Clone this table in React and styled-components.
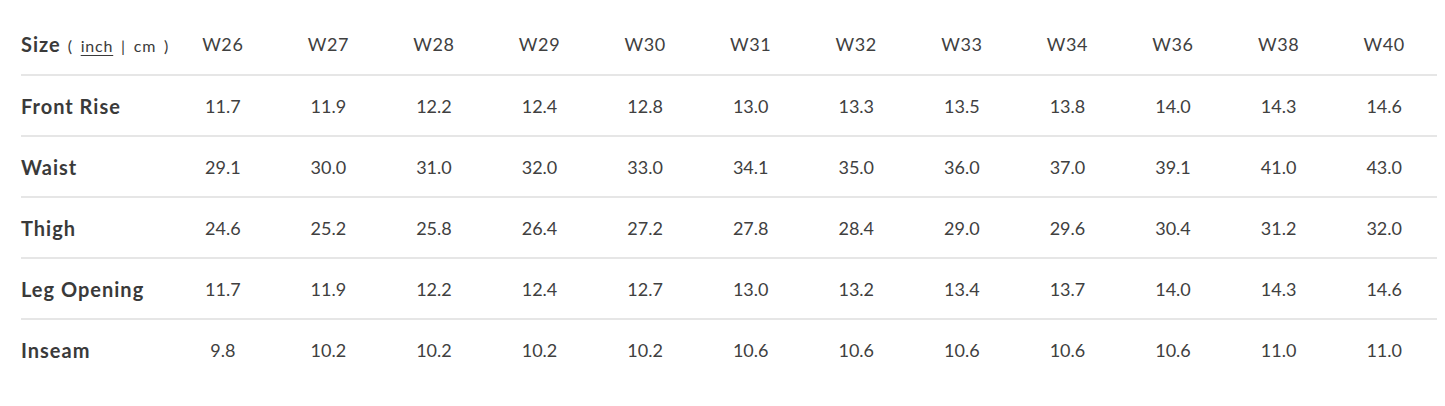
import React from 'react'
import styled, {createGlobalStyle} from 'styled-components'

const Global = createGlobalStyle`
body {
  margin: 0;
  background: #fff;
  font-family: Lato, "Open Sans", sans-serif;
  color: #3a3a3a;
}
`

const Wrap = styled.div`
padding: 14px 8px 0 21px;
`

const Table = styled.table`
width: 100%;
border-collapse: collapse;
table-layout: fixed;
`

const Row = styled.tr`
height: 61px;
border-top: ${p => p.first ? 'none' : '2px solid #e6e6e6'};
`

const Label = styled.th`
width: 149px;
text-align: left;
font-weight: 700;
font-size: 20px;
letter-spacing: 1px;
padding: 0;
white-space: nowrap;
`

const Unit = styled.span`
font-weight: 400;
font-size: 16px;
margin-left: 7px;
letter-spacing: 0.8px;
word-spacing: 3px;
`

const UnitLink = styled.span`
text-decoration: underline;
text-underline-offset: 3px;
`

const Cell = styled.td`
text-align: center;
font-size: 18px;
padding: 0;
color: #404040;
`

const HeadCell = styled(Cell)`
letter-spacing: 0.6px;
`

const sizes = ['W26','W27','W28','W29','W30','W31','W32','W33','W34','W36','W38','W40']

const rows = [
  ['Front Rise', ['11.7','11.9','12.2','12.4','12.8','13.0','13.3','13.5','13.8','14.0','14.3','14.6']],
  ['Waist', ['29.1','30.0','31.0','32.0','33.0','34.1','35.0','36.0','37.0','39.1','41.0','43.0']],
  ['Thigh', ['24.6','25.2','25.8','26.4','27.2','27.8','28.4','29.0','29.6','30.4','31.2','32.0']],
  ['Leg Opening', ['11.7','11.9','12.2','12.4','12.7','13.0','13.2','13.4','13.7','14.0','14.3','14.6']],
  ['Inseam', ['9.8','10.2','10.2','10.2','10.2','10.6','10.6','10.6','10.6','10.6','11.0','11.0']],
]

export default function App() {
  return <Wrap>
    <Global />
    <Table>
      <tbody>
        <Row first>
          <Label>Size<Unit>( <UnitLink>inch</UnitLink> | cm )</Unit></Label>
          {sizes.map(s => <HeadCell key={s}>{s}</HeadCell>)}
        </Row>
        {rows.map(([name, vals]) => <Row key={name}>
          <Label>{name}</Label>
          {vals.map((v, i) => <Cell key={i}>{v}</Cell>)}
        </Row>)}
      </tbody>
    </Table>
  </Wrap>
}
